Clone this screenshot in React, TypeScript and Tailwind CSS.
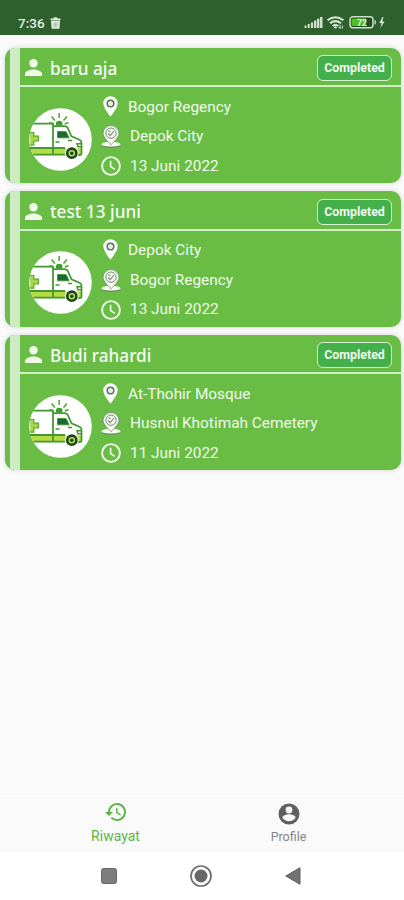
import React from "react";

type Trip = { name: string; from: string; to: string; date: string };

const trips: Trip[] = [
  { name: "baru aja", from: "Bogor Regency", to: "Depok City", date: "13 Juni 2022" },
  { name: "test 13 juni", from: "Depok City", to: "Bogor Regency", date: "13 Juni 2022" },
  { name: "Budi rahardi", from: "At-Thohir Mosque", to: "Husnul Khotimah Cemetery", date: "11 Juni 2022" },
];

function StatusBar() {
  return (
    <header className="flex h-[35px] shrink-0 items-end bg-[#2e602d] pr-[18px] pb-[5px] pl-[18px]">
      <span className="text-[13.5px] leading-[14px] font-medium text-[#e4efe2]">7:36</span>
      <svg className="mb-[1px] ml-[5px]" width="11" height="12" viewBox="0 0 11 12">
        <path d="M0.5 1.5h3L4 0.3h3l0.5 1.2h3v1.7h-10zM1 3.8h9l-0.5 8h-8z" fill="#dfeadc" />
        <path d="M4 5.5v4.3M5.5 5.5v4.3M7 5.5v4.3" stroke="#8fac8c" strokeWidth="0.7" />
      </svg>
      <svg className="ml-auto" width="82" height="15" viewBox="0 0 82 15">
        <g fill="#cfe0cb">
          <rect x="0.5" y="10.5" width="2" height="2.5" />
          <rect x="3.7" y="9" width="2" height="4" />
          <rect x="6.9" y="7.5" width="2.2" height="5.5" />
          <rect x="10" y="5.5" width="2.4" height="7.5" />
          <rect x="13" y="3.7" width="2.4" height="9.3" />
          <rect x="16" y="2" width="2.5" height="11" />
        </g>
        <g fill="none" stroke="#d6e6d2" strokeWidth="2">
          <path d="M23.500 5.300q8-6 16 0" />
          <path d="M26 8.200q5.500-4.200 11 0" />
          <path d="M28.600 11q2.900-2.500 5.800 0" />
        </g>
        <circle cx="31.5" cy="12.2" r="1.3" fill="#d6e6d2" />
        <path d="M36 9.500v4M34.500 12l1.500 1.500 1.500-1.500M38.500 13.500v-3" stroke="#d6e6d2" strokeWidth="0.9" fill="none" />
        <rect x="46" y="1.8" width="23" height="11" rx="3" fill="#254b25" stroke="#cfe0cb" strokeWidth="1.5" />
        <path d="M49 3.500h13v7.600H49q-1.500 0-1.500-1.500V5q0-1.500 1.500-1.500z" fill="#4cc222" />
        <path d="M70.500 5.300h1.300v4h-1.300z" fill="#cfe0cb" />
        <text x="58" y="10.5" textAnchor="middle" fontFamily="Roboto, sans-serif" fontSize="8.5" fontWeight="700" fill="#e8f6e2">72</text>
        <path d="M78.500 2l-3.300 6h2.300l-1 5 4-6.500h-2.300l1.300-4.500z" fill="#d6e6d2" />
      </svg>
    </header>
  );
}

function PersonIcon() {
  return (
    <svg width="17" height="17" viewBox="0 0 17 17" fill="#f0fae9">
      <circle cx="8.5" cy="4.3" r="4.2" />
      <path d="M0 17v-2.200c0-2.700 5.200-4.300 8.500-4.300s8.500 1.600 8.500 4.300V17z" />
    </svg>
  );
}

function Ambulance() {
  return (
    <svg width="63" height="63" viewBox="0 0 63 63">
      <circle cx="31.5" cy="31.5" r="31.3" fill="#fff" />
      <g fill="none" stroke="#4da32b" strokeWidth="1.5">
        <path d="M30.200 5v5M22.500 8.500l3.500 4M38 8.500l-3.500 4M20.500 14.500l4 1.500M39.500 14.500l-3.800 1.500" />
      </g>
      <path d="M27 17.500v-2.200q0-2.500 3.200-2.500t3.200 2.500v2.200z" fill="#399b32" />
      <path d="M1.200 24.500h3.600v3.700h4.700v4.800H4.800v4.200H1.200" fill="#a9d548" stroke="#55a82f" strokeWidth="1.2" />
      <path d="M1.500 40.200h47l4 0.300v5.800H3.800z" fill="#b8dc45" />
      <path d="M4.500 15.700H24v30.800M24 18.200h11.500q2.500 0 3.500 2.300l3.500 7.800 7.500 3.200q2.500 1 2.500 3.700v10q0 1.800-2 1.800h-2.300M36.500 46.700H4.500M1 40h35" fill="none" stroke="#41992f" strokeWidth="1.800" />
      <path d="M28.500 23.500h7.500q1.300 0 1.800 1.300l2.200 5H28.500z" fill="#1d6932" stroke="#43983a" strokeWidth="1" />
      <path d="M26.500 34h4M43 32.500h-4M52.300 35.800h-4.300l1 3h3.300" fill="none" stroke="#41992f" strokeWidth="1.500" />
      <circle cx="42.8" cy="45.2" r="6.8" fill="#fff" />
      <circle cx="42.8" cy="45.2" r="4.6" fill="#b7dc44" stroke="#164820" strokeWidth="2.6" />
      <circle cx="42.8" cy="45.2" r="1.7" fill="#164820" />
    </svg>
  );
}

function PinIcon() {
  return (
    <svg width="15" height="21" viewBox="0 0 15 21">
      <path d="M7.500 0.300a7.200 7 0 0 0-7.200 7c0 5 7.200 13.400 7.200 13.400s7.200-8.400 7.200-13.400a7.200 7 0 0 0-7.200-7z" fill="#fafdf8" />
      <circle cx="7.5" cy="7.5" r="3.3" fill="#e4eee0" stroke="#5a725c" strokeWidth="1.5" />
    </svg>
  );
}

function DestinationIcon() {
  return (
    <svg width="20" height="23" viewBox="0 0 20 23">
      <path d="M6 17q-5.500 0.800-5.500 2.700 0 2.300 9.500 2.300t9.500-2.300q0-1.900-5.500-2.700" fill="#f5faf2" />
      <path d="M0.700 20.700q2 1.400 9.300 1.400t9.300-1.400" fill="none" stroke="#55744d" strokeWidth="0.9" />
      <path d="M10 0.500A8 7.900 0 0 0 2 8.400c0 4.300 8 11.300 8 11.300s8-7 8-11.300A8 7.900 0 0 0 10 0.500z" fill="#f7fbf5" stroke="#6c8e64" strokeWidth="0.8" />
      <circle cx="10" cy="8.2" r="5.2" fill="#f1f5ef" stroke="#7d8a79" strokeWidth="1" />
      <path d="M7 8.500l2.200 2.200L13 6M7.500 5.800l2 1" fill="none" stroke="#7d8a79" strokeWidth="1.100" />
    </svg>
  );
}

function ClockIcon() {
  return (
    <svg width="20" height="20" viewBox="0 0 20 20" fill="none" stroke="#effbe9" strokeWidth="1.9">
      <circle cx="10" cy="10" r="8.9" />
      <path d="M9.600 4.800v5.700l4.200 2.800" strokeWidth="1.6" />
    </svg>
  );
}

function TripCard({ trip }: { trip: Trip }) {
  return (
    <article className="flex h-[135.5px] overflow-hidden rounded-[10px] bg-[#69bd45] shadow-[0_0_5px_rgba(0,0,0,0.16)]">
      <div className="ml-[4.5px] w-[10px] shrink-0 bg-[#cdebc4]" />
      <div className="flex min-w-0 flex-1 flex-col">
        <div className="flex h-[39.5px] shrink-0 items-center border-b-2 border-[#d2efc5] pt-[3px] pr-[9px] pl-[5.5px]">
          <PersonIcon />
          <h2 className="ml-[8px] flex-1 pt-[2px] font-['Noto_Sans'] text-[17.2px] leading-6 font-medium text-[#f6fcf2]">{trip.name}</h2>
          <span className="mt-[1px] flex h-[26px] w-[75px] items-center justify-center rounded-[6px] border-[1.5px] border-[#d6f1d2] bg-[#43b04b] pt-px text-[12.4px] font-bold whitespace-nowrap text-[#f0faec]">
            Completed
          </span>
        </div>
        <div className="flex flex-1">
          <div className="pt-[20.5px] pl-[9.5px]">
            <Ambulance />
          </div>
          <div className="flex flex-col pt-[5.5px] pl-[8.5px] text-[15.4px] whitespace-nowrap text-[#effbe9]">
            <div className="flex h-[29.5px] items-center">
              <span className="flex w-[19px] justify-center pb-[2px]"><PinIcon /></span>
              <span className="ml-[8.5px]">{trip.from}</span>
            </div>
            <div className="flex h-[29.5px] items-center">
              <DestinationIcon />
              <span className="ml-[9.5px]">{trip.to}</span>
            </div>
            <div className="flex h-[29.5px] items-center">
              <ClockIcon />
              <span className="ml-[9.5px]">{trip.date}</span>
            </div>
          </div>
        </div>
      </div>
    </article>
  );
}

function BottomTabs() {
  return (
    <nav className="flex h-[58px] shrink-0 border-t border-[#f5f5f5] bg-[#fafafa] pl-[29px]">
      <div className="flex w-[173px] flex-col items-center pt-[6px] text-[#5fb446]">
        <svg width="22" height="22" viewBox="1 1 22 22" fill="currentColor">
          <path d="M13 3a9 9 0 0 0-9 9H1l3.890 3.890.070.140L9 12H6a7 7 0 1 1 2.060 4.940l-1.420 1.420A9 9 0 1 0 13 3zm-1 5v5l4.280 2.540.720-1.210-3.500-2.080V8z" />
        </svg>
        <span className="mt-[4px] text-[14px] leading-[18px]">Riwayat</span>
      </div>
      <div className="flex w-[173px] flex-col items-center pt-[8px] text-[#858585]">
        <svg width="22" height="22" viewBox="0 0 22 22">
          <circle cx="11" cy="11" r="10.5" fill="#606060" />
          <circle cx="11" cy="7" r="3.4" fill="#fafafa" />
          <path d="M4.400 14.700c0-2.200 4.400-3.400 6.600-3.400s6.600 1.200 6.600 3.400a7.800 7.800 0 0 1-13.200 0z" fill="#fafafa" />
        </svg>
        <span className="mt-[3px] text-[12.5px] leading-[18px]">Profile</span>
      </div>
    </nav>
  );
}

function SystemNav() {
  return (
    <footer className="flex h-[48px] shrink-0 items-center bg-white pl-[101px]">
      <div className="size-[16px] rounded-[2.5px] border border-[#686868] bg-[#7d7d7d]" />
      <svg className="ml-[73px]" width="22" height="22" viewBox="0 0 22 22">
        <circle cx="11" cy="11" r="10" fill="none" stroke="#6c6c6c" strokeWidth="1.7" />
        <circle cx="11" cy="11" r="6.5" fill="#686868" />
      </svg>
      <svg className="ml-[73px]" width="16" height="18" viewBox="0 0 16 18">
        <path d="M0.800 9L15 0.700v16.600z" fill="#737373" stroke="#606060" strokeWidth="1" strokeLinejoin="round" />
      </svg>
    </footer>
  );
}

export default function App() {
  return (
    <div className="flex h-[900px] w-[404px] flex-col overflow-hidden bg-[#fafafa] font-[Roboto,sans-serif]">
      <StatusBar />
      <main className="flex flex-1 flex-col gap-[8px] pt-[12.5px] pr-[3px] pl-[5px]">
        {trips.map((trip) => (
          <TripCard key={trip.name} trip={trip} />
        ))}
      </main>
      <BottomTabs />
      <SystemNav />
    </div>
  );
}
